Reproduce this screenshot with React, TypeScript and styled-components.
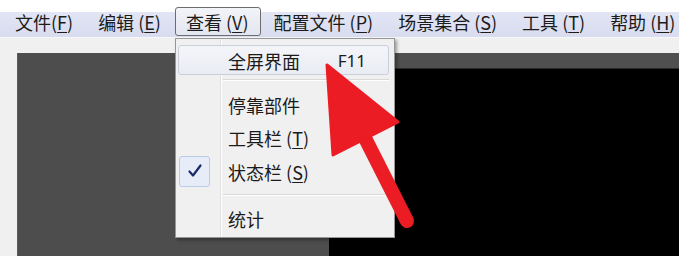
import styled, { createGlobalStyle } from "styled-components";

const GlobalStyle = createGlobalStyle`
  html, body {
    margin: 0;
    padding: 0;
    background: #ffffff;
  }
  body {
    font-family: "Noto Sans CJK SC", "Noto Sans", sans-serif;
    color: #1b1b1b;
  }
`;

const Screen = styled.div`
  position: relative;
  width: 679px;
  height: 256px;
  overflow: hidden;
  display: flex;
  flex-direction: column;
  background: #f0f0f0;
`;

const TopGap = styled.div`
  height: 6px;
  background: #ffffff;
`;

const MenuBar = styled.div`
  height: 32px;
  display: flex;
  align-items: flex-start;
  gap: 2px;
  padding-left: 4px;
  background: linear-gradient(#ffffff 0, #ffffff 6px, #e2e5f4 6px, #d8dcef 100%);
  border-bottom: 1px solid #f6f7fb;
  box-sizing: border-box;
`;

const MenuTitle = styled.div<{ $open?: boolean }>`
  height: 29px;
  margin-top: 1px;
  padding: 0 11px 0 10px;
  display: flex;
  align-items: center;
  font-size: 18px;
  white-space: nowrap;
  box-sizing: border-box;
  border: 1px solid ${(p) => (p.$open ? "#6d6d6d" : "transparent")};
  border-radius: 3px;
  background: ${(p) =>
    p.$open ? "linear-gradient(#f3f4f8, #e3e6f0)" : "transparent"};
`;

const Key = styled.span`
  text-decoration: underline;
  text-underline-offset: 2px;
`;

const Spacer = styled.div`
  height: 15px;
`;

const Workspace = styled.div`
  flex: 1;
  display: flex;
  padding-left: 17px;
`;

const LeftPanel = styled.div`
  width: 311px;
  background: #4d4d4d;
  border-left: 1px solid #5c5c5c;
`;

const RightPanel = styled.div`
  flex: 1;
  display: flex;
  flex-direction: column;
  background: #4f4f4f;
`;

const RightHeader = styled.div`
  height: 15px;
  border-bottom: 1px solid #2a2a2a;
`;

const Viewport = styled.div`
  flex: 1;
  background: #000000;
`;

const Dropdown = styled.div`
  position: absolute;
  left: 175px;
  top: 38px;
  width: 220px;
  height: 200px;
  box-sizing: border-box;
  padding: 6px 5px 2px 2px;
  border: 1px solid #979797;
  box-shadow: 2px 2px 3px rgba(0, 0, 0, 0.35);
  background: linear-gradient(
    to right,
    #f0f0f0 44px,
    #e0e0e0 44px,
    #e0e0e0 45px,
    #ffffff 45px,
    #ffffff 46px,
    #f0f0f0 46px
  );
  display: flex;
  flex-direction: column;
`;

const Item = styled.div<{ $height: number; $hot?: boolean }>`
  height: ${(p) => p.$height}px;
  flex-shrink: 0;
  display: grid;
  grid-template-columns: 43px 1fr auto;
  align-items: center;
  font-size: 18px;
  box-sizing: border-box;
  border: 1px solid ${(p) => (p.$hot ? "#c9cfdb" : "transparent")};
  border-radius: 3px;
  background: ${(p) =>
    p.$hot ? "linear-gradient(#f4f5f9, #e9ecf3)" : "transparent"};
`;

const ItemLabel = styled.span`
  padding-left: 6px;
  padding-top: 1px;
  white-space: nowrap;
`;

const Shortcut = styled.span`
  padding-right: 22px;
  padding-top: 1px;
  font-family: "Noto Sans", "DejaVu Sans", sans-serif;
  font-size: 17px;
`;

const CheckBox = styled.div`
  width: 31px;
  height: 31px;
  box-sizing: border-box;
  border: 1px solid #b9cbe6;
  border-radius: 3px;
  background: #e6edf9;
  display: flex;
  align-items: center;
  justify-content: center;
`;

const Separator = styled.div<{ $above: number; $below: number }>`
  margin: ${(p) => p.$above}px 0 ${(p) => p.$below}px 45px;
  height: 1px;
  flex-shrink: 0;
  background: #d9d9d9;
  border-bottom: 1px solid #ffffff;
`;

const Arrow = styled.svg`
  position: absolute;
  left: 0;
  top: 0;
  width: 679px;
  height: 256px;
  pointer-events: none;
`;

const Check = () => (
  <svg width="16" height="16" viewBox="0 0 16 16">
    <path
      d="M2.5 8.5 L6 12.5 L13.5 2.5"
      fill="none"
      stroke="#1c2a6b"
      strokeWidth="2.2"
      strokeLinecap="round"
      strokeLinejoin="round"
    />
  </svg>
);

const App = () => {
  return (
    <>
      <GlobalStyle />
      <Screen>
        <TopGap />
        <MenuBar>
          <MenuTitle>
            文件(<Key>F</Key>)
          </MenuTitle>
          <MenuTitle>
            编辑 (<Key>E</Key>)
          </MenuTitle>
          <MenuTitle $open>
            查看 (<Key>V</Key>)
          </MenuTitle>
          <MenuTitle>
            配置文件 (<Key>P</Key>)
          </MenuTitle>
          <MenuTitle>
            场景集合 (<Key>S</Key>)
          </MenuTitle>
          <MenuTitle>
            工具 (<Key>T</Key>)
          </MenuTitle>
          <MenuTitle>
            帮助 (<Key>H</Key>)
          </MenuTitle>
        </MenuBar>
        <Spacer />
        <Workspace>
          <LeftPanel />
          <RightPanel>
            <RightHeader />
            <Viewport />
          </RightPanel>
        </Workspace>

        <Dropdown>
          <Item $height={30} $hot>
            <span />
            <ItemLabel>全屏界面</ItemLabel>
            <Shortcut>F11</Shortcut>
          </Item>
          <Separator $above={4} $below={7} />
          <Item $height={33}>
            <span />
            <ItemLabel>停靠部件</ItemLabel>
          </Item>
          <Item $height={33}>
            <span />
            <ItemLabel>
              工具栏 (<Key>T</Key>)
            </ItemLabel>
          </Item>
          <Item $height={34}>
            <CheckBox>
              <Check />
            </CheckBox>
            <ItemLabel>
              状态栏 (<Key>S</Key>)
            </ItemLabel>
          </Item>
          <Separator $above={6} $below={7} />
          <Item $height={31}>
            <span />
            <ItemLabel>统计</ItemLabel>
          </Item>
        </Dropdown>

        <Arrow viewBox="0 0 679 256">
          <line
            x1="366"
            y1="140"
            x2="407"
            y2="221"
            stroke="#ec1c24"
            strokeWidth="14"
            strokeLinecap="round"
          />
          <polygon
            points="327,65 333,155 398,122"
            fill="#ec1c24"
            stroke="#ec1c24"
            strokeWidth="3"
            strokeLinejoin="round"
          />
        </Arrow>
      </Screen>
    </>
  );
};

export default App;
